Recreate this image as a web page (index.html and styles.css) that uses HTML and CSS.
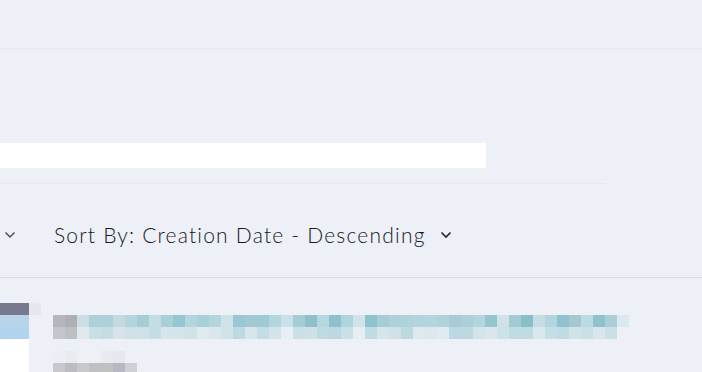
FILE: index.html
```html
<!DOCTYPE html>
<html lang="en">
<head>
<meta charset="utf-8">
<title>List</title>
<link rel="stylesheet" href="styles.css">
</head>
<body>
<div class="page">
  <header class="topbar"></header>
  <section class="search">
    <div class="search-input"></div>
    <div class="search-divider"></div>
  </section>
  <section class="toolbar">
    <button class="filter-toggle" type="button" aria-label="Filter">
      <svg width="12" height="8" viewBox="0 0 12 8"><path d="M1.5 1.5 L6 6 L10.5 1.5" fill="none" stroke="#4a4d5c" stroke-width="1.5"/></svg>
    </button>
    <button class="sort" type="button">
      <span class="sort-label">Sort By: Creation Date - Descending</span>
      <svg width="12" height="8" viewBox="0 0 12 8"><path d="M1.5 1.5 L6 6 L10.5 1.5" fill="none" stroke="#1f2230" stroke-width="1.6"/></svg>
    </button>
  </section>
  <section class="list">
    <article class="item">
      <div class="thumb">
        <div class="thumb-img">
          <div class="px px-a"></div>
          <div class="px px-b"></div>
          <div class="px px-c"></div>
          <div class="thumb-rest"></div>
        </div>
        <div class="thumb-edge">
          <div class="px edge-a"></div>
        </div>
      </div>
      <div class="item-body">
        <div class="mosaic" id="mosaic"></div>
      </div>
    </article>
  </section>
</div>
<script src="script.js"></script>
</body>
</html>
```

FILE: styles.css
```css
* { box-sizing: border-box; }
html, body { margin: 0; padding: 0; }
body {
  background: #eef0f8;
  font-family: Lato, "Open Sans", sans-serif;
  color: #1f2230;
  width: 702px;
  height: 372px;
  overflow: hidden;
}
.page { display: flex; flex-direction: column; }
.topbar {
  height: 49px;
  border-bottom: 1px solid #e6e6ec;
}
.search {
  padding-top: 94px;
  display: flex;
  flex-direction: column;
}
.search-input {
  width: 486px;
  height: 25px;
  background: #ffffff;
}
.search-divider {
  margin-top: 15px;
  width: 606px;
  height: 1px;
  background: #e6e7ee;
}
.toolbar {
  height: 94px;
  display: flex;
  align-items: center;
  padding-top: 8px;
  border-bottom: 1px solid #d9dadf;
}
button {
  background: none;
  border: 0;
  padding: 0;
  font: inherit;
  color: inherit;
  display: flex;
  align-items: center;
}
.filter-toggle { margin-left: 4px; width: 12px; }
.sort { margin-left: 38px; gap: 14px; }
.sort-label {
  font-size: 21px;
  line-height: 24px;
  letter-spacing: 1.2px;
  font-weight: 300;
  color: #161925;
}
.list { display: flex; flex-direction: column; }
.item {
  display: flex;
  padding-top: 25px;
  height: 95px;
}
.thumb { display: flex; }
.thumb-img { width: 29px; display: flex; flex-direction: column; }
.px { height: 12px; }
.px-a { background: #767990; }
.px-b { background: #b8d4e8; }
.px-c { background: #b2d3ee; }
.thumb-rest { flex: 1; background: #ffffff; }
.thumb-edge { width: 12px; background: #edf0f7; }
.edge-a { background: #e4e7f0; }
.item-body { margin-left: 12px; padding-top: 12px; }
.mosaic { display: flex; flex-direction: column; }
.mosaic-row { display: flex; height: 12px; }
.cell { width: 12px; height: 12px; }
```

FILE: script.js
```js
(function () {
  var rows = [
    ["#b4b6bf","#aeafb3","#c9dfe5","#aed1d9","#aed1d9","#c5dae0","#b3d5dd","#a6cdd4","#c2dde4","#a9d0d7","#96c6d2","#b3d6dd","#a9d0d7","#b3d5dd","#cfe2e8","#99c7d3","#a0c9d3","#9ccbd6","#b3d6dd","#c9e0e6","#a4ccd5","#8fbfcb","#b5d7de","#8fc0cc","#b0d4dc","#d1e2e8","#8fc2cf","#a6cdd5","#aed1d9","#b0d3da","#b2d4dc","#b3d5dd","#b0d3da","#a9ccd4","#add0d8","#b3d5dd","#96c5d1","#cfe2e8","#a2cbd4","#8cbec9","#c6dde4","#b3d5dd","#8fc2cf","#a6c8d0","#bcdae1","#90c2ce","#a9d0d7","#dbe9ef"],
    ["#c3c6cf","#bcc0c0","#e1e8ee","#c7dfe6","#c4dde4","#d6e3ea","#cde1e7","#cfe2e8","#c4dde5","#d6e5eb","#d3e4ea","#d1e3e9","#e0ebf0","#dae7ed","#d0e3e8","#bcdae1","#d7e6ec","#c2dde4","#d2e4ea","#e8eef5","#c9e0e6","#cde1e7","#bddae1","#bcd9e0","#c9e0e6","#e6eef4","#c0dce3","#d5e5eb","#cde1e7","#bcd9e0","#dde9ef","#dde8ee","#e0ebf1","#bcd9e1","#bcd9e1","#d3e4ea","#d9e7ec","#cde2e8","#c0dce3","#c0dce3","#d9e8ee","#c4dee5","#c0dce3","#d1e3e9","#c9e0e6","#d6e6ec","#cbe0e6"],
    [],
    ["#eceef5","#e9ebf3","#eef0f6","#eef0f6","#e8eaf1","#e6e8f1"],
    ["#c8c7cc","#bdbcc3","#c8c9cb","#c0c0c4","#c0c2c1","#b6b8c3","#cfd0d5"]
  ];
  var host = document.getElementById("mosaic");
  rows.forEach(function (row) {
    var r = document.createElement("div");
    r.className = "mosaic-row";
    row.forEach(function (c) {
      var cell = document.createElement("span");
      cell.className = "cell";
      cell.style.background = c;
      r.appendChild(cell);
    });
    host.appendChild(r);
  });
})();
```
